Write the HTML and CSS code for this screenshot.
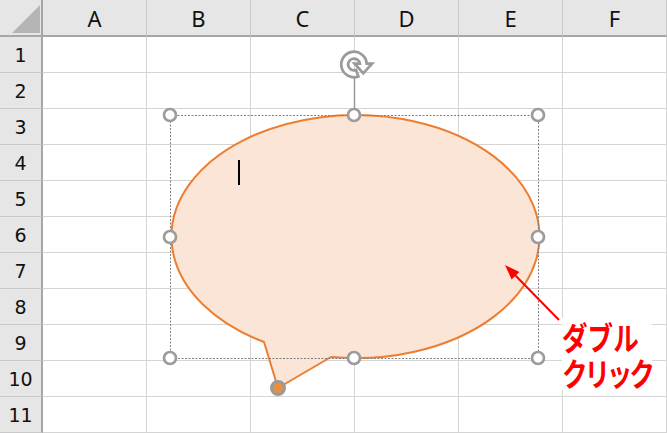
FILE: index.html
```html
<!DOCTYPE html>
<html lang="ja">
<head>
  <meta charset="UTF-8" />
  <title>吹き出し</title>
  <link rel="stylesheet" href="styles.css">
</head>
<body>

  <div class="sheet">
    <div class="corner"></div>
    <div class="col-head">A</div>
    <div class="col-head">B</div>
    <div class="col-head">C</div>
    <div class="col-head">D</div>
    <div class="col-head">E</div>
    <div class="col-head">F</div>

    <div class="row-head">1</div><div class="cell"></div><div class="cell"></div><div class="cell"></div><div class="cell"></div><div class="cell"></div><div class="cell"></div>
    <div class="row-head">2</div><div class="cell"></div><div class="cell"></div><div class="cell"></div><div class="cell"></div><div class="cell"></div><div class="cell"></div>
    <div class="row-head">3</div><div class="cell"></div><div class="cell"></div><div class="cell"></div><div class="cell"></div><div class="cell"></div><div class="cell"></div>
    <div class="row-head">4</div><div class="cell"></div><div class="cell"></div><div class="cell"></div><div class="cell"></div><div class="cell"></div><div class="cell"></div>
    <div class="row-head">5</div><div class="cell"></div><div class="cell"></div><div class="cell"></div><div class="cell"></div><div class="cell"></div><div class="cell"></div>
    <div class="row-head">6</div><div class="cell"></div><div class="cell"></div><div class="cell"></div><div class="cell"></div><div class="cell"></div><div class="cell"></div>
    <div class="row-head">7</div><div class="cell"></div><div class="cell"></div><div class="cell"></div><div class="cell"></div><div class="cell"></div><div class="cell"></div>
    <div class="row-head">8</div><div class="cell"></div><div class="cell"></div><div class="cell"></div><div class="cell"></div><div class="cell"></div><div class="cell"></div>
    <div class="row-head">9</div><div class="cell"></div><div class="cell"></div><div class="cell"></div><div class="cell"></div><div class="cell"></div><div class="cell"></div>
    <div class="row-head">10</div><div class="cell"></div><div class="cell"></div><div class="cell"></div><div class="cell"></div><div class="cell"></div><div class="cell"></div>
    <div class="row-head">11</div><div class="cell"></div><div class="cell"></div><div class="cell"></div><div class="cell"></div><div class="cell"></div><div class="cell"></div>
  </div>

  <!-- selected callout shape, drawn over the sheet -->
  <svg class="overlay" width="667" height="433" viewBox="0 0 667 433">
    <path class="balloon" d="M264 342 L278 388 L331 357 A184 121.5 0 1 0 264 342 Z"/>
    <rect class="caret" x="238" y="160" width="2" height="25"/>

    <rect class="frame" x="170.5" y="115.5" width="368" height="243"/>
    <line class="rotate-stem" x1="354.5" y1="78" x2="354.5" y2="110"/>
    <path class="rotate-icon" transform="translate(354 64.5) scale(0.98)"
      d="M4.45 12.22 A13 13 0 1 1 12.96 -1 L18.5 -1 L9.5 9 L0.5 -1 L5.92 -1 A6 6 0 1 0 2.05 5.64 Z"/>

    <circle class="handle" cx="170" cy="115" r="6"/>
    <circle class="handle" cx="354" cy="115" r="6"/>
    <circle class="handle" cx="538" cy="115" r="6"/>
    <circle class="handle" cx="170" cy="237" r="6"/>
    <circle class="handle" cx="538" cy="237" r="6"/>
    <circle class="handle" cx="170" cy="358" r="6"/>
    <circle class="handle" cx="354" cy="358" r="6"/>
    <circle class="handle" cx="538" cy="358" r="6"/>
    <circle class="tip-handle" cx="278" cy="388" r="6.5"/>

    <line class="pointer" x1="559" y1="320" x2="512" y2="272"/>
    <polygon class="pointer-head" points="505,265 511.6,279.5 519.4,271.9"/>
  </svg>

  <div class="note">ダブル<br><span class="tight">クリック</span></div>

</body>
</html>
```

FILE: styles.css
```css
body {
  margin: 0;
  background-color: #fff;
  width: 667px;
  height: 433px;
  overflow: hidden;
  position: relative;
}

.sheet {
  display: grid;
  grid-template-columns: 43px repeat(6, 104px);
  grid-template-rows: 37px repeat(11, 36px);
}

.sheet > div {
  box-sizing: border-box;
}

.corner {
  position: relative;
  background-color: #e6e6e6;
  border-right: 2px solid #a6a6a6;
  border-bottom: 2px solid #a6a6a6;
}

.corner::after {
  content: "";
  position: absolute;
  left: 12px;
  top: 5px;
  width: 28px;
  height: 28px;
  background-color: #b5b5b5;
  clip-path: polygon(100% 0, 100% 100%, 0 100%);
}

.col-head {
  background-color: #e6e6e6;
  border-right: 1px solid #c8c8c8;
  border-bottom: 2px solid #a6a6a6;
  display: flex;
  align-items: center;
  justify-content: center;
  font-family: "Noto Sans", sans-serif;
  font-size: 22px;
  color: #111;
}

.row-head {
  background-color: #e6e6e6;
  border-right: 2px solid #a6a6a6;
  border-bottom: 1px solid #c8c8c8;
  display: flex;
  align-items: center;
  justify-content: center;
  font-family: "DejaVu Sans", sans-serif;
  font-size: 19px;
  color: #111;
}

.cell {
  border-right: 1px solid #d4d4d4;
  border-bottom: 1px solid #d4d4d4;
}

.overlay {
  position: absolute;
  left: 0;
  top: 0;
  pointer-events: none;
}

.balloon {
  fill: #fbe5d6;
  stroke: #ed7d31;
  stroke-width: 2;
  stroke-linejoin: round;
}

.caret {
  fill: #000;
}

.frame {
  fill: none;
  stroke: #7f7f7f;
  stroke-width: 1;
  stroke-dasharray: 2 1.5;
}

.rotate-stem {
  stroke: #9a9a9a;
  stroke-width: 1.5;
}

.rotate-icon {
  fill: #fff;
  stroke: #9a9a9a;
  stroke-width: 2.8;
  stroke-linejoin: miter;
}

.handle {
  fill: #fff;
  stroke: #9c9c9c;
  stroke-width: 2.7;
}

.tip-handle {
  fill: #e8913c;
  stroke: #9a9a9a;
  stroke-width: 3;
}

.pointer {
  stroke: #ff0000;
  stroke-width: 2;
}

.pointer-head {
  fill: #ff0000;
}

.note {
  position: absolute;
  left: 562px;
  top: 318px;
  background-color: #fff;
  color: #ff0000;
  font-family: "Noto Sans CJK JP", sans-serif;
  font-weight: bold;
  font-size: 32px;
  line-height: 36px;
  white-space: nowrap;
  transform: scaleX(0.8);
  transform-origin: left top;
}

.tight {
  letter-spacing: -4px;
}
```
